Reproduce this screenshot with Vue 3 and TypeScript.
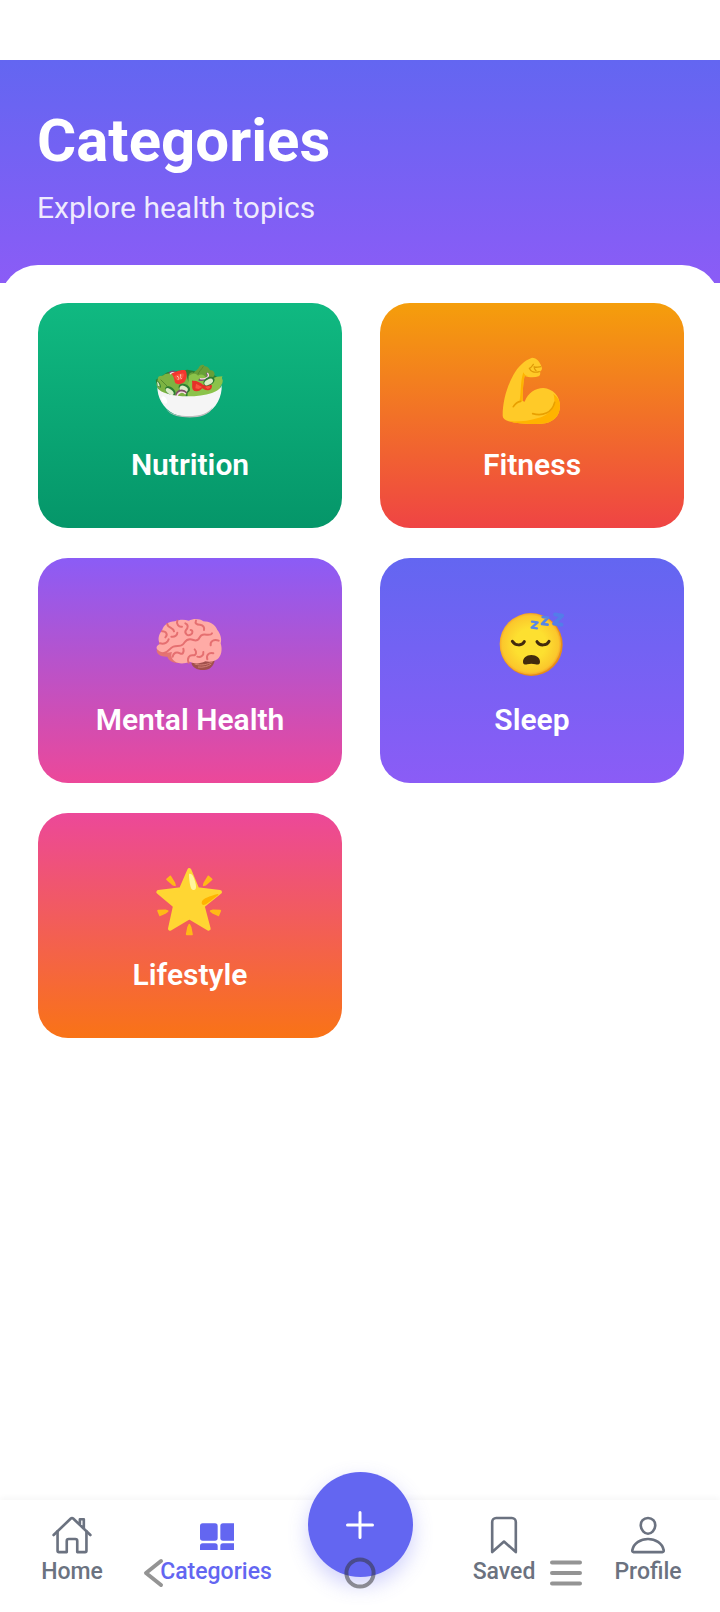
<script setup lang="ts">
interface Category {
  id: string
  name: string
}

interface Tab {
  id: string
  label: string
}

const categories: Category[] = [
  { id: 'nutrition', name: 'Nutrition' },
  { id: 'fitness', name: 'Fitness' },
  { id: 'mental', name: 'Mental Health' },
  { id: 'sleep', name: 'Sleep' },
  { id: 'lifestyle', name: 'Lifestyle' },
]

const leftTabs: Tab[] = [
  { id: 'home', label: 'Home' },
  { id: 'categories', label: 'Categories' },
]

const rightTabs: Tab[] = [
  { id: 'saved', label: 'Saved' },
  { id: 'profile', label: 'Profile' },
]

const activeTab = 'categories'
</script>

<template>
  <div class="screen">
    <header class="header">
      <h1 class="title">Categories</h1>
      <p class="subtitle">Explore health topics</p>
    </header>

    <main class="sheet">
      <div class="grid">
        <button v-for="c in categories" :key="c.id" type="button" class="card" :class="c.id">
          <!-- Salad bowl -->
          <svg v-if="c.id === 'nutrition'" class="emoji" viewBox="0 0 300 270" aria-hidden="true">
            <path fill="#2e7d32" d="M48 104l6 32 60 22 120-14 12-38-20-14-30-8-54-10-60 8z" />
            <path fill="#689f38" d="M146 92c2-10 12-12 16-8 2-8 10-8 14-16 4-10 16-12 18-4 8-2 14 6 16 12 8-2 14 4 14 12l-14 30h-60z" />
            <path fill="#7cb342" d="M50 122c-2-10 4-16 4-24 4-8 14-2 20-10 8-4 18-2 24-2 14-8 32-6 40 2 4 10 6 22 10 28l-12 40-70-8z" />
            <path fill="#8bc34a" d="M146 94c8-10 22-10 28-2 8-6 18-4 22 4l20 6c8-6 20-8 32-8-6 6 2 10 0 16 0 8-8 12-8 20l-8 22-90 8z" />
            <path fill="#7cb342" d="M86 100c14 4 20 14 30 18l12 34-40-6z" />
            <path fill="none" stroke="#558b2f" stroke-width="3" d="M190 64c-4 8-14 16-16 24M156 108c12 4 12 18 8 30M62 104l20 20" />
            <path fill="none" stroke="#795077" stroke-width="6" d="M88 84c8-8 20-4 22 2M200 84c12 12-4 24-24 20" />
            <path fill="none" stroke="#f8dfe5" stroke-width="4" d="M90 87c7-6 14-4 17 0M202 84c10 10-4 20-22 17" />
            <path fill="#f4362f" d="M94 86c10-4 30-14 42-10 6 8 6 24-2 34-8 8-22 10-28 4-4-8-2-18-12-28z" />
            <path fill="#f9553f" d="M103 94c10-8 22-10 28-8 2 8-4 18-12 20-8 2-13-4-16-12z" />
            <path stroke="#ffccbc" stroke-width="3" stroke-linecap="round" d="M112 94l4 3M122 89v5M114 103l3-2M124 101l-2-3" />
            <path fill="#e53128" d="M156 108c12-2 24 4 34 12 8-4 18-8 26 2 0 8-4 14-14 14-8 0-10-4-16-6-4 8-18 12-26 6-6-8-2-18-4-28z" />
            <path fill="#f9553f" d="M168 116l18 10-10 6-10-2zM196 126l12-4 3 6-8 4z" />
            <ellipse cx="207" cy="109" rx="18" ry="12" fill="#2e7d32" transform="rotate(-28 207 109)" />
            <ellipse cx="206" cy="111" rx="14" ry="8" fill="#dcedc8" transform="rotate(-28 206 111)" />
            <ellipse cx="133" cy="130" rx="18" ry="13" fill="#2e7d32" transform="rotate(25 133 130)" />
            <ellipse cx="131" cy="132" rx="13" ry="9" fill="#dcedc8" transform="rotate(25 131 132)" />
            <path fill="none" stroke="#7f4d67" stroke-width="7" d="M109 152c2-16 20-20 30-8" />
            <path fill="none" stroke="#f8dfe5" stroke-width="4" d="M111 153c3-12 18-16 26-6" />
            <ellipse cx="91" cy="138" rx="18" ry="11" fill="#2e7d32" transform="rotate(38 91 138)" />
            <ellipse cx="89" cy="140" rx="14" ry="7" fill="#dcedc8" transform="rotate(38 89 140)" />
            <path fill="#2e7d32" d="M47 104c10 4 16 12 16 24l-10-4z" />
            <path fill="#dcedc8" d="M51 109c6 5 8 10 8 16l-6-3z" />
            <path fill="#f5f5f5" d="M52 122c0 12 12 18 30 24 40 12 96 10 134-2 14-5 26-12 29-24 2 34-16 72-48 86-26 12-70 12-96 0-32-16-50-50-49-84z" />
            <path fill="#bdbdbd" d="M78 193c12 10 20 14 32 17 26 5 60 4 80-3 12-5 20-10 28-20-4 14-24 27-46 29-22 3-48 1-62-3-14-4-26-11-32-20z" />
            <ellipse cx="73" cy="165" rx="7" ry="12" fill="#fff" transform="rotate(-28 73 165)" />
          </svg>

          <!-- Flexed biceps -->
          <svg v-else-if="c.id === 'fitness'" class="emoji" viewBox="6 0 300 270" aria-hidden="true">
            <path fill="#ffca28" d="M68 212c0-42 12-86 32-122 14-26 34-44 56-52 14 0 26 14 30 32 0 6-4 8-6 10 2 6 0 12-4 14-12 4-30 4-42-2-4 18-6 40-6 76l6 2c10-26 32-41 56-41 28 2 50 24 50 54 0 30-22 52-56 53-38 2-72 0-98-7-12-4-18-10-18-17z" />
            <path fill="#ffb300" d="M220 146c14 11 20 22 20 37 0 30-22 52-56 53-40 2-74 0-96-7 32 1 60-1 86-10 36-9 58-36 46-73z" />
            <path fill="#ffb300" d="M130 82c4 8 8 11 16 12-8 0-10-1-12-2-4 18-6 40-6 76l-10 2c6-20 2-60 12-88z" />
            <path fill="none" stroke="#e9a000" stroke-width="5" stroke-linecap="round" d="M100 185c6-10 12-15 22-16M158 206c30 8 58-2 66-34" />
            <path fill="none" stroke="#df9a08" stroke-width="4" stroke-linecap="round" stroke-linejoin="round" d="M160 58c-4 6-6 10-12 12M148 70c4 10 16 14 30 10M162 66c6 2 14 0 20-1M163 66c-1 5 2 8 5 11" />
          </svg>

          <!-- Brain -->
          <svg v-else-if="c.id === 'mental'" class="emoji" viewBox="0 0 300 270" aria-hidden="true">
            <path fill="#a1504c" d="M154 188c2 14 18 23 38 22 18-1 28-12 32-28l-30-8z" />
            <path fill="none" stroke="#d17f75" stroke-width="3" d="M164 192c20 6 38 2 54-7M174 201c16 2 30-2 40-9" />
            <path fill="#e57373" d="M56 138l-6 12c0 14 14 21 32 20 6 14 20 21 38 18l30-24z" />
            <path fill="#ffaba6" d="M60 132c-8-14-4-30 6-40 4-16 20-28 38-28 14-6 30-6 42-2 16-8 34-6 44 2 18 0 36 10 42 26 10 12 14 28 10 40 6 20 2 38-10 48-10 8-24 8-36 6-16 8-32 8-46 2-18 6-36 6-46-2-10-8-12-18-8-28-18 4-34 2-42-6-8-6-4-14 6-18z" />
            <g fill="none" stroke="#e56f70" stroke-width="6" stroke-linecap="round" stroke-linejoin="round">
              <path d="M66 94c14 0 18 10 10 18M82 72c0 12 18 10 20 22M112 62c-4 10 4 20 14 18M94 110c10 2 18-4 18-12M60 130c14 4 24-4 26-12" />
              <path d="M70 160c16-2 18-16 30-20s22 2 30-8 8-14 20-14c10 0 14 6 22 2s6-14 16-16 24 4 28-4" />
              <path d="M136 70c10 4 8 14 2 20-6 8 4 20 14 14 8-4 6-14 0-14M168 62c-4 8 2 12 12 12 10 2 14 8 12 16M236 122c-14-6-26 2-24 14" />
              <path d="M98 170c2-12 12-16 22-10s12-8 10-14M146 188c-6-14 2-24 14-22 10 0 10-12 4-18M172 170c10 4 20-4 18-14M202 178c-4-12 4-22 18-18" />
            </g>
          </svg>

          <!-- Sleeping face -->
          <svg v-else-if="c.id === 'sleep'" class="emoji" viewBox="6 0 300 270" aria-hidden="true">
            <defs>
              <radialGradient id="face-fill" cx="0.5" cy="0.5" r="0.5">
                <stop offset="0.5" stop-color="#fde030" />
                <stop offset="0.92" stop-color="#fbc72c" />
                <stop offset="1" stop-color="#f5a72a" />
              </radialGradient>
            </defs>
            <circle cx="154" cy="134" r="94" fill="#e88d17" />
            <circle cx="151" cy="132" r="92" fill="url(#face-fill)" />
            <path fill="none" stroke="#422b0d" stroke-width="9" stroke-linecap="round" d="M97 124c8 14 30 14 36 1M171 125c8 14 30 12 36-1" />
            <path fill="#422b0d" d="M154 165c16 0 26 9 26 20 0 9-7 10-14 8-8-2-16-2-24 0-7 2-13 0-13-7 0-12 10-21 25-21z" />
            <g fill="none" stroke-linejoin="round" stroke-linecap="round">
              <path stroke="#5685e8" stroke-width="7" d="M156 65l17 2-18 16 16 2" />
              <path stroke="#5685e8" stroke-width="8" d="M188 51l16 2-18 19 17 2" />
              <path stroke="#537de9" stroke-width="11" d="M225 43l22 4-25 24 23 3" />
            </g>
          </svg>

          <!-- Glowing star -->
          <svg v-else class="emoji" viewBox="0 0 300 270" aria-hidden="true">
            <g fill="#ffb917" stroke="#ffb917" stroke-width="5" stroke-linejoin="round">
              <path d="M81 73l10-9 12 20 2 7-6-2zM215 73l-10-9-12 20-2 7 6-2zM54 167l22-1 7 2-6 5-17 8zM241 167l-22-1-7 2 6 5 17 8zM148 209l4 8 4 21h-16l4-21z" />
            </g>
            <path fill="#ffd633" stroke="#ffd633" stroke-width="12" stroke-linejoin="round" d="M148 45l24 58 68 8-52 42 18 68-58-34-58 34 15-68-50-42 68-8z" />
            <path fill="#ffb300" d="M186 139c4-9 22-15 47-22 3 0 3 3 1 4-22 16-34 29-44 29-5 0-6-6-4-11z" />
            <path fill="#fff59d" d="M149 56c5 0 10 4 13 14 5 14 8 26 5 32-3 5-10 4-13-1-4-8-7-30-7-42 0-2 0-3 2-3z" />
          </svg>
          <span class="card-label">{{ c.name }}</span>
        </button>
      </div>
    </main>

    <nav class="tabbar" aria-label="Main">
      <button v-for="t in leftTabs" :key="t.id" type="button" class="tab" :class="{ active: t.id === activeTab }">
        <svg v-if="t.id === 'home'" class="tab-icon" viewBox="0 0 512 512" aria-hidden="true">
          <path d="M80 212v236a16 16 0 0016 16h96V328a24 24 0 0124-24h80a24 24 0 0124 24v136h96a16 16 0 0016-16V212" />
          <path d="M480 256L266.89 52c-5-5.28-16.69-5.34-21.78 0L32 256M400 179V64h-48v69" />
        </svg>
        <svg v-else class="tab-icon solid" viewBox="0 0 126 126" aria-hidden="true">
          <path d="M23 28h37a8 8 0 018 8v36a8 8 0 01-8 8H23a8 8 0 01-8-8V36a8 8 0 018-8z" />
          <path d="M84 28h33v52H84a8 8 0 01-8-8V36a8 8 0 018-8z" />
          <path d="M23 88h37a8 8 0 018 8v12H15V96a8 8 0 018-8zM84 88h33v20H76V96a8 8 0 018-8z" />
        </svg>
        <span class="tab-label">{{ t.label }}</span>
      </button>

      <div class="fab-slot">
        <button type="button" class="fab" aria-label="Add">
          <svg class="fab-icon" viewBox="0 0 28 28" aria-hidden="true">
            <path d="M14 1.5v25M1.5 14h25" />
          </svg>
        </button>
      </div>

      <button v-for="t in rightTabs" :key="t.id" type="button" class="tab">
        <svg v-if="t.id === 'saved'" class="tab-icon" viewBox="0 0 512 512" aria-hidden="true">
          <path d="M352 48H160a48 48 0 00-48 48v368l144-128 144 128V96a48 48 0 00-48-48z" />
        </svg>
        <svg v-else class="tab-icon" viewBox="0 0 512 512" aria-hidden="true">
          <path d="M344 144c-3.92 52.87-44 96-88 96s-84.15-43.12-88-96c-4-55 35-96 88-96s92 42 88 96z" />
          <path d="M256 304c-87 0-175.3 48-191.64 138.6C62.39 453.52 68.57 464 80 464h352c11.44 0 17.62-10.48 15.64-21.4C431.3 352 343 304 256 304z" />
        </svg>
        <span class="tab-label">{{ t.label }}</span>
      </button>
    </nav>

    <!-- Device navigation buttons float over the tab bar -->
    <div class="system-nav">
      <button type="button" class="system-button" aria-label="Back">
        <svg viewBox="0 0 36 36" aria-hidden="true"><path d="M25 6L10 18l15 12" /></svg>
      </button>
      <button type="button" class="system-button" aria-label="Home screen">
        <svg viewBox="0 0 36 36" aria-hidden="true"><circle cx="18" cy="18" r="13.6" /></svg>
      </button>
      <button type="button" class="system-button" aria-label="Recent apps">
        <svg viewBox="0 0 36 36" aria-hidden="true"><path d="M4 7.5h28M4 18h28M4 28.5h28" /></svg>
      </button>
    </div>
  </div>
</template>

<style>
body {
  margin: 0;
  background: #fff;
}
</style>

<style scoped>
.screen {
  box-sizing: border-box;
  min-height: 100vh;
  display: flex;
  flex-direction: column;
  padding-top: 60px;
  background: #fff;
  font-family: Roboto, "Liberation Sans", sans-serif;
}

button {
  border: 0;
  margin: 0;
  padding: 0;
  background: none;
  font-family: inherit;
  cursor: pointer;
}

svg {
  display: block;
}

.header {
  padding: 45px 37px 55px;
  background: linear-gradient(180deg, #6366f1, #8b5cf6);
  color: #fff;
}

.title {
  margin: 0 0 11px;
  font-size: 60px;
  line-height: 72px;
  font-weight: 700;
}

.subtitle {
  margin: 0;
  font-size: 30px;
  line-height: 40px;
  color: rgba(255, 255, 255, 0.88);
}

.sheet {
  flex: 1;
  margin-top: -18px;
  padding: 38px 36px 38px 38px;
  border-radius: 38px 38px 0 0;
  background: #fff;
}

.grid {
  display: grid;
  grid-template-columns: 1fr 1fr;
  gap: 30px 38px;
}

.card {
  display: flex;
  flex-direction: column;
  align-items: center;
  gap: 10px;
  padding: 42px 16px 43px;
  border-radius: 30px;
  color: #fff;
}

.nutrition { background: linear-gradient(180deg, #10b981, #059669); }
.fitness { background: linear-gradient(180deg, #f59e0b, #ef4444); }
.mental { background: linear-gradient(180deg, #8b5cf6, #ec4899); }
.sleep { background: linear-gradient(180deg, #6366f1, #8b5cf6); }
.lifestyle { background: linear-gradient(180deg, #ec4899, #f97316); }

.emoji {
  width: 100px;
  height: 90px;
}

.card-label {
  font-size: 30px;
  line-height: 40px;
  font-weight: 600;
}

.tabbar {
  position: sticky;
  bottom: 0;
  display: flex;
  align-items: flex-start;
  padding: 14px 0 26px;
  background: #fff;
  box-shadow: 0 -2px 6px rgba(0, 0, 0, 0.04);
}

.tab {
  flex: 1;
  display: flex;
  flex-direction: column;
  align-items: center;
  gap: 2px;
  color: #6b7280;
}

.tab.active {
  color: #6366f1;
}

.tab-icon {
  width: 42px;
  height: 42px;
  fill: none;
  stroke: currentColor;
  stroke-width: 32;
  stroke-linecap: round;
  stroke-linejoin: round;
}

.tab-icon.solid {
  fill: currentColor;
  stroke: none;
}

.tab-label {
  font-size: 23px;
  line-height: 28px;
  font-weight: 500;
}

.fab-slot {
  flex: 1;
  height: 72px;
  display: flex;
  align-items: flex-end;
  justify-content: center;
}

.fab {
  flex: none;
  display: flex;
  align-items: center;
  justify-content: center;
  width: 105px;
  height: 105px;
  margin-bottom: 9px;
  border-radius: 50%;
  background: #6366f1;
  box-shadow: 0 8px 20px rgba(99, 102, 241, 0.3);
}

.fab-icon {
  width: 28px;
  height: 28px;
  fill: none;
  stroke: #fff;
  stroke-width: 3;
  stroke-linecap: round;
}

.system-nav {
  position: fixed;
  right: 0;
  bottom: 0;
  left: 0;
  display: flex;
  align-items: center;
  height: 78px;
  padding: 0 7%;
  pointer-events: none;
}

.system-button {
  flex: 1;
  display: flex;
  justify-content: center;
}

.system-button svg {
  width: 36px;
  height: 36px;
  fill: none;
  stroke: rgba(50, 50, 50, 0.52);
  stroke-width: 4;
  stroke-linecap: round;
  stroke-linejoin: round;
  pointer-events: auto;
}
</style>
